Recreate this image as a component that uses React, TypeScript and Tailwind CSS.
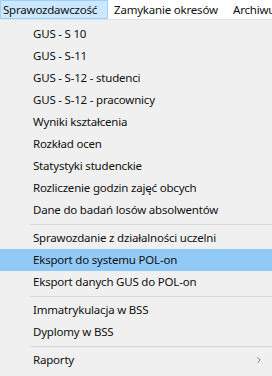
import { ChevronRight } from 'lucide-react';

type Entry = { label: string; active?: boolean; sub?: boolean } | 'sep';

const ITEMS: Entry[] = [
  { label: 'GUS - S 10' },
  { label: 'GUS - S-11' },
  { label: 'GUS - S-12 - studenci' },
  { label: 'GUS - S-12 - pracownicy' },
  { label: 'Wyniki kształcenia' },
  { label: 'Rozkład ocen' },
  { label: 'Statystyki studenckie' },
  { label: 'Rozliczenie godzin zajęć obcych' },
  { label: 'Dane do badań losów absolwentów' },
  'sep',
  { label: 'Sprawozdanie z działalności uczelni' },
  { label: 'Eksport do systemu POL-on', active: true },
  { label: 'Eksport danych GUS do POL-on' },
  'sep',
  { label: 'Immatrykulacja w BSS' },
  { label: 'Dyplomy w BSS' },
  'sep',
  { label: 'Raporty', sub: true },
];

export default function App() {
  return (
    <div
      className="w-[272px] h-[376px] overflow-hidden bg-[#f0f0f0] text-[11.5px] tracking-[-0.2px] text-[#111]"
      style={{ fontFamily: '"Segoe UI", "Noto Sans", sans-serif' }}
    >
      {/* Menu bar */}
      <div className="flex h-[20px] bg-white border-b border-[#e3e3e3] whitespace-nowrap">
        <div className="h-[19px] w-[108px] shrink-0 pl-[2px] flex items-center bg-[#cce8ff] border border-[#99d1ff]">
          Sprawozdawczość
        </div>
        <div className="h-[19px] w-[119px] shrink-0 pl-[6px] flex items-center">Zamykanie okresów</div>
        <div className="h-[19px] pl-[6px] flex items-center">Archiwum</div>
      </div>

      {/* Dropdown */}
      <div className="pt-[3px]">
        {ITEMS.map((it, i) =>
          it === 'sep' ? (
            <div key={i} className="h-[6px] flex items-center pl-[30px]">
              <div className="h-px w-full bg-[#d7d7d7]" />
            </div>
          ) : (
            <div
              key={i}
              className={`h-[22px] flex items-center pl-[33px] pr-[8px] whitespace-nowrap ${
                it.active ? 'bg-[#91c9f7]' : ''
              }`}
            >
              <span className="flex-1">{it.label}</span>
              {it.sub && <ChevronRight size={10} strokeWidth={1.5} className="text-[#333]" />}
            </div>
          )
        )}
      </div>
    </div>
  );
}
